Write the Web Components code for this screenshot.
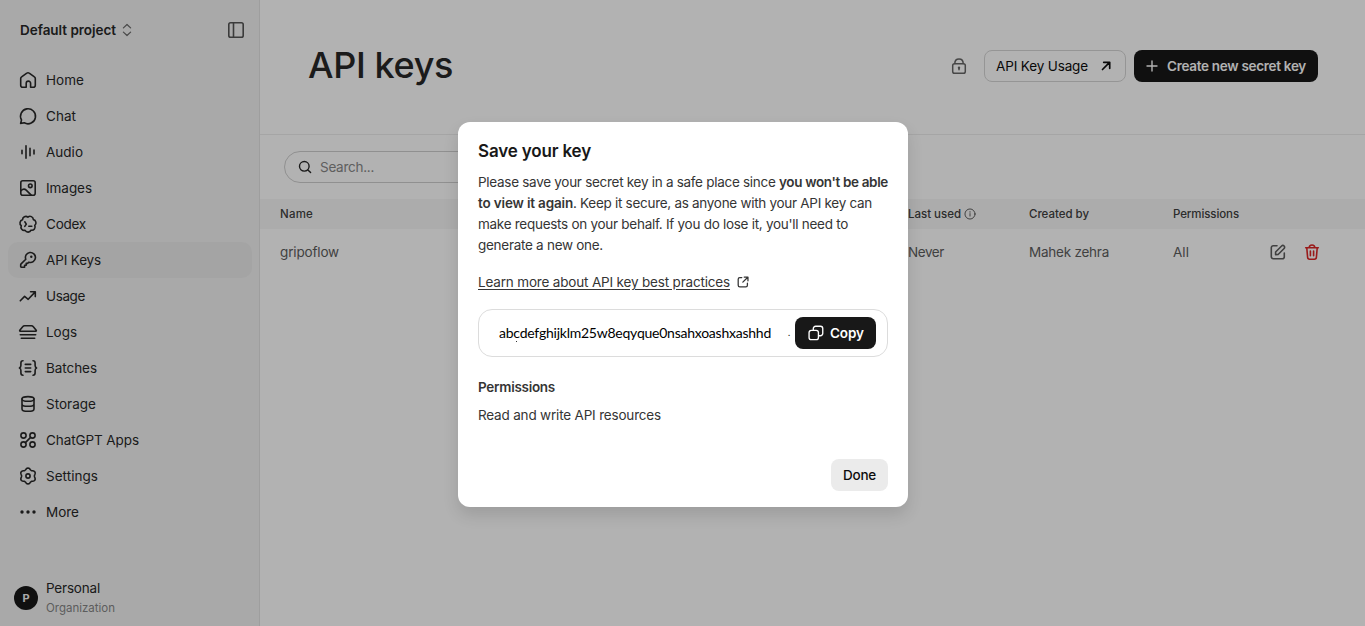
<!DOCTYPE html>
<html lang="en">
<head>
<meta charset="utf-8">
<title>API keys</title>
<style>
html,body{margin:0;height:100%;overflow:hidden}
body{font:400 13.5px/20px Inter,"Liberation Sans",sans-serif;color:#282828;background:#fff}
</style>
</head>
<body>
<keys-app></keys-app>
<script>
// closed outline made of n round lobes
function lobes(n,r,arc,turn){
    let d="";
    for(let i=0;i<=n;i++){
        const a=(turn+i*360/n)*Math.PI/180,x=(10+r*Math.cos(a)).toFixed(2),y=(10+r*Math.sin(a)).toFixed(2);
        d+=i?`A${arc} ${arc} 0 0 1 ${x} ${y}`:`M${x} ${y}`;
    }
    return d+"z";
}

// soft six-toothed wheel, one tooth straight up
function gear(r,depth){
    const pts=[];
    for(let a=0;a<360;a+=6){
        const t=a*Math.PI/180,q=r-depth*Math.cos(6*t);
        pts.push((10+q*Math.cos(t)).toFixed(2)+" "+(10+q*Math.sin(t)).toFixed(2));
    }
    return "M"+pts.join("L")+"z";
}

const icons={
    home:`<path d="M2.7 8.6c0-.7.3-1.3.9-1.7l5.2-3.7a2 2 0 0 1 2.4 0l5.2 3.7c.6.4.9 1 .9 1.7v6.6a2 2 0 0 1-2 2h-2.7v-3.9a2.2 2.2 0 0 0-4.4 0v3.9H4.7a2 2 0 0 1-2-2z"/>`,
    chat:`<path d="M2.6 17.4 3.5 14A7.5 7.5 0 1 1 6.3 16.8z"/>`,
    audio:`<path d="M4 8.3v3.4M8 3.7v12.6M12 6.3v7.4M16 8v4"/>`,
    images:`<rect x="2.8" y="2.8" width="14.4" height="14.4" rx="2"/><circle cx="12.3" cy="7.8" r="1.8"/><path d="M3 12.6c2-1.9 3.6-2 5.2-.5l5 5"/>`,
    codex:`<path d="${lobes(7,6.9,3.3,12)}"/><path d="m6.8 7.8 1.5 2.3-1.5 2.3M10.8 12.3h3"/>`,
    key:`<path d="M7.8 9.3A5 5 0 1 1 10.9 12.2L9.6 13.4H8.2v1.8H6.6v2H3.3a.6.6 0 0 1-.6-.6v-1.8c0-.3.1-.6.4-.9z"/><circle cx="13.3" cy="6.7" r="1.2" fill="currentColor" stroke="none"/>`,
    usage:`<path d="m2.3 14.8 4.3-4.4 3.6 2.9 6.8-7.2M12.6 5.8h4.7v4.8"/>`,
    logs:`<path d="M2.2 9.2h15.6c.5 0 .7-.5.4-.9l-3.1-3.8a2 2 0 0 0-1.6-.8h-7a2 2 0 0 0-1.6.8L1.8 8.3c-.3.4-.1.9.4.9zM2.3 12.7h15.4M3.3 16.3h13.4"/>`,
    batches:`<path d="M5 2.8c-1.5 0-2.1.7-2.1 2.1v2.7C2.9 9 2.6 9.5 1.4 10c1.2.5 1.5 1 1.5 2.4v2.7c0 1.4.6 2.1 2.1 2.1M15 2.8c1.5 0 2.1.7 2.1 2.1v2.7c0 1.4.3 1.9 1.5 2.4-1.2.5-1.5 1-1.5 2.4v2.7c0 1.4-.6 2.1-2.1 2.1M7.3 6.4h5.4M7.3 10h5.4M7.3 13.6h5.4"/>`,
    storage:`<ellipse cx="10" cy="4.9" rx="6" ry="2.3"/><path d="M4 4.9v10c0 1.3 2.7 2.4 6 2.4s6-1.1 6-2.4v-10M4 9.9c0 1.3 2.7 2.4 6 2.4s6-1.1 6-2.4"/>`,
    apps:`<circle cx="5.5" cy="5.5" r="2.6"/><circle cx="14.5" cy="5.5" r="2.6"/><circle cx="5.5" cy="14.5" r="2.6"/><circle cx="14.5" cy="14.5" r="2.6"/><path d="m12.6 7.4-5.2 5.2"/>`,
    settings:`<path d="${gear(7.2,.8)}"/><circle cx="10" cy="10" r="2.1"/>`,
    more:`<g fill="currentColor" stroke="none"><circle cx="4" cy="10" r="1.7"/><circle cx="10" cy="10" r="1.7"/><circle cx="16" cy="10" r="1.7"/></g>`,
    updown:`<path d="M6 7.6 10 3.8l4 3.8M6 12.4l4 3.8 4-3.8"/>`,
    panel:`<rect x="2.8" y="2.8" width="14.4" height="14.4" rx="1.8"/><path d="M7.5 3v14"/>`,
    lock:`<rect x="3.7" y="7.8" width="12.6" height="9.4" rx="1.8"/><path d="M5.8 7.600C5.800 4.700 7.400 3 10 3s4.200 1.700 4.200 4.600M10 12v1.800"/><circle cx="10" cy="11.7" r="1.2" fill="currentColor" stroke="none"/>`,
    arrow:`<path d="M6.5 13.5l6.800-6.800M7.700 6.300h6v6"/>`,
    plus:`<path d="M10 5v10M5 10h10"/>`,
    search:`<circle cx="9.3" cy="9.3" r="4.8"/><path d="m12.9 12.9 2.7 2.7"/>`,
    info:`<circle cx="10" cy="10" r="8.4"/><path d="M10 9.300v4.200"/><circle cx="10" cy="6.500" r="1" fill="currentColor" stroke="none"/>`,
    edit:`<path d="M9 3.700H5.300a2 2 0 0 0-2 2v9a2 2 0 0 0 2 2h9a2 2 0 0 0 2-2V11M7.600 12.600V10l6-6a1.700 1.700 0 0 1 2.500 2.500l-6 6z"/>`,
    trash:`<path d="M3.700 5.800h12.600M7.200 5.700c0-1.700.8-2.700 2.800-2.700s2.800 1 2.800 2.700M4.800 6l.8 9.300a2 2 0 0 0 2 1.900h4.800a2 2 0 0 0 2-1.900l.8-9.300M8.400 9v4.800M11.600 9v4.800"/>`,
    external:`<path d="M8.500 4.500H6a2 2 0 0 0-2 2V14a2 2 0 0 0 2 2h7.500a2 2 0 0 0 2-2v-2.500M11.500 3.800h4.700v4.700M16 4l-6.200 6.200"/>`,
    copy:`<rect x="2.300" y="7" width="10.400" height="10.400" rx="2.500"/><path d="M7 6.700V5a2.500 2.500 0 0 1 2.500-2.500H15A2.500 2.500 0 0 1 17.500 5v5.500a2.500 2.500 0 0 1-2.500 2.500h-2"/>`
};

class UiIcon extends HTMLElement{
    constructor(){
        super();
        this.attachShadow({mode:"open"});
    }
    connectedCallback(){
        const size=this.getAttribute("size")||20;
        this.shadowRoot.innerHTML=`
        <style>
            :host{display:block;flex:none;width:${size}px;height:${size}px}
            svg{display:block}
        </style>
        <svg width="${size}" height="${size}" viewBox="0 0 20 20" fill="none" stroke="currentColor" stroke-width="${this.getAttribute("stroke")||1.6}" stroke-linecap="round" stroke-linejoin="round">${icons[this.getAttribute("name")]}</svg>`;
    }
}

// one line of text, tracked so that it fills w pixels
class FitText extends HTMLElement{
    constructor(){
        super();
        this.attachShadow({mode:"open"}).innerHTML=`<style>
            :host{display:inline-block;flex:none;vertical-align:top}
            span{white-space:pre}
        </style><span><slot></slot></span>`;
    }
    connectedCallback(){
        const w=+this.getAttribute("w"),span=this.shadowRoot.querySelector("span");
        const gap=(w-span.getBoundingClientRect().width)/this.textContent.length;
        span.style.letterSpacing=gap.toFixed(3)+"px";
        this.style.width=w+"px";
    }
}

class NavItem extends HTMLElement{
    constructor(){
        super();
        this.attachShadow({mode:"open"}).innerHTML=`
        <style>
            :host{display:flex;align-items:center;gap:8px;height:36px;padding-left:10px;border-radius:10px;box-sizing:border-box}
            :host([active]){background:#ebebeb}
        </style>
        <ui-icon name="${this.getAttribute("icon")}"></ui-icon><slot></slot>`;
    }
}

class UiButton extends HTMLElement{
    constructor(){
        super();
        this.attachShadow({mode:"open"}).innerHTML=`
        <style>
            :host{display:flex;align-items:center;height:32px;padding:0 12px;border-radius:8px;box-sizing:border-box;flex:none;color:#0d0d0d}
            :host([kind=outline]){border:1px solid #d6d6d6;padding:0 11px}
            :host([kind=solid]){background:#181818;color:#fff;font-weight:600}
            :host([kind=soft]){background:#ebebeb}
        </style>
        <slot></slot>`;
    }
}

class SideBar extends HTMLElement{
    constructor(){
        super();
        const items=[["home","Home",38],["chat","Chat",30],["audio","Audio",37],["images","Images",46],["codex","Codex",40],["key","API Keys",55],["usage","Usage",39],["logs","Logs",31],["batches","Batches",51],["storage","Storage",50],["apps","ChatGPT Apps",93],["settings","Settings",52],["more","More",33]];
        this.attachShadow({mode:"open"}).innerHTML=`
        <style>
            :host{display:flex;flex-direction:column;width:260px;height:100%;box-sizing:border-box;border-right:1px solid #e2e2e2;background:#f3f3f3;flex:none}
            header{display:flex;align-items:center;height:60px;padding:0 13px 0 20px;font-weight:600}
            header .ud{margin-left:2px;color:#6b6b6b}
            header .panel{margin-left:auto;color:#555}
            nav{padding:2px 7px 0 8px}
            footer{display:flex;align-items:center;gap:8px;margin-top:auto;padding:0 14px 8px;height:40px}
            .avatar{width:24px;height:24px;border-radius:50%;background:#181818;color:#f3f3f3;display:grid;place-items:center;font-size:11px;font-weight:700}
            .who{display:flex;flex-direction:column}
            small{font-size:11.5px;color:#868686}
        </style>
        <header><fit-text w="96">Default project</fit-text><ui-icon class="ud" name="updown" size="18" stroke="1.4"></ui-icon><ui-icon class="panel" name="panel"></ui-icon></header>
        <nav>${items.map(([icon,name,w])=>`<nav-item icon="${icon}"${icon==="key"?" active":""}><fit-text w="${w}">${name}</fit-text></nav-item>`).join("")}</nav>
        <footer><div class="avatar">P</div><div class="who"><fit-text w="54">Personal</fit-text><small><fit-text w="69">Organization</fit-text></small></div></footer>`;
    }
}

class KeysPage extends HTMLElement{
    constructor(){
        super();
        this.attachShadow({mode:"open"}).innerHTML=`
        <style>
            :host{display:block;flex:1;min-width:0}
            header{display:flex;align-items:center;height:135px;padding:0 47px 2px 48px;box-sizing:border-box;border-bottom:1px solid #ececec}
            h1{margin:0 auto 2px 0;font-size:36px;line-height:44px;font-weight:500}
            .lock{color:#666;margin-right:15px}
            .tools{display:flex;gap:8px}
            .search{display:flex;align-items:center;gap:5px;width:300px;height:32px;margin:16px 0 16px 24px;padding-left:10px;border:1px solid #cfcfcf;border-radius:16px;box-sizing:border-box;color:#282828}
            .search fit-text{color:#888}
            .row{display:grid;grid-template-columns:628px 121px 144px 95px 34px 20px;padding-left:20px;align-items:center;height:45px}
            .head{height:30px;background:#f7f7f7;font-size:11.5px;font-weight:450;color:#404040}
            .body{color:#5d5d5d}
            .head div{display:flex;align-items:center;gap:3px}
        </style>
        <header>
            <h1><fit-text w="145">API keys</fit-text></h1>
            <ui-icon class="lock" name="lock" stroke="1.5"></ui-icon>
            <div class="tools">
                <ui-button kind="outline"><fit-text w="92">API Key Usage</fit-text><ui-icon name="arrow" stroke="1.7" style="margin:0 -2px 0 8px"></ui-icon></ui-button>
                <ui-button kind="solid"><ui-icon name="plus" stroke="1.4" style="margin:0 5px 0 -4px"></ui-icon><fit-text w="139">Create new secret key</fit-text></ui-button>
            </div>
        </header>
        <div class="search"><ui-icon name="search" stroke="1.4"></ui-icon><fit-text w="54">Search...</fit-text></div>
        <div class="row head"><div><fit-text w="33">Name</fit-text></div><div><fit-text w="53">Last used</fit-text><ui-icon name="info" size="12" stroke="1.400"></ui-icon></div><div><fit-text w="60">Created by</fit-text></div><div><fit-text w="66">Permissions</fit-text></div></div>
        <div class="row body"><fit-text w="59">gripoflow</fit-text><fit-text w="36">Never</fit-text><fit-text w="80">Mahek zehra</fit-text><fit-text w="16">All</fit-text><ui-icon name="edit"></ui-icon><ui-icon name="trash" style="color:#dc2626"></ui-icon></div>`;
    }
}

class KeyDialog extends HTMLElement{
    constructor(){
        super();
        this.attachShadow({mode:"open"}).innerHTML=`
        <style>
            :host{display:flex;flex-direction:column;width:450px;height:385px;margin:3px 0 0 1px;padding:16px 20px;box-sizing:border-box;border-radius:12px;background:#fff;box-shadow:0 8px 16px rgba(0,0,0,.12);color:#353535}
            h2{margin:0;font-size:17px;line-height:26px;font-weight:600;color:#181818}
            p{margin:8px 0 0;line-height:21px}
            p span{height:21px;white-space:nowrap;display:flex}
            b{font-weight:600}
            .link{display:flex;align-items:center;gap:5px;height:20px;margin-top:16px}
            .link fit-text{text-decoration:underline;text-underline-offset:2px}
            .key{display:flex;align-items:center;height:48px;margin-top:17px;padding:0 11px 0 20px;box-sizing:border-box;border:1px solid #dcdcdc;border-radius:14px}
            .value{position:relative;display:flex;flex:1;font:14px/20px Lato,sans-serif;color:#000}
            .value i{position:absolute;left:17px;top:18px;width:1px;height:1px;background:#333}
            .dot{margin-left:17px;font-size:9px}
            h3{margin:20px 0 0;font-size:13.5px;line-height:20px;font-weight:600}
            .scope{margin-top:8px}
            ui-button[kind=soft]{margin:auto 0 0 auto;font-weight:500}
        </style>
        <h2><fit-text w="113">Save your key</fit-text></h2>
        <p>
            <span><fit-text w="301">Please save your secret key in a safe place since </fit-text><b><fit-text w="109">you won't be able</fit-text></b></span>
            <span><b><fit-text w="95">to view it again</fit-text></b><fit-text w="299">. Keep it secure, as anyone with your API key can</fit-text></span>
            <span><fit-text w="370">make requests on your behalf. If you do lose it, you'll need to</fit-text></span>
            <span><fit-text w="125">generate a new one.</fit-text></span>
        </p>
        <div class="link"><fit-text w="252">Learn more about API key best practices</fit-text><ui-icon name="external" size="16" stroke="1.6"></ui-icon></div>
        <div class="key">
            <div class="value"><fit-text w="272">abcdefghijklm25w8eqyque0nsahxoashxashhd</fit-text><i></i><span class="dot">.</span></div>
            <ui-button kind="solid"><ui-icon name="copy" size="18" stroke="1.5" style="margin-right:5px"></ui-icon><fit-text w="34">Copy</fit-text></ui-button>
        </div>
        <h3><fit-text w="77">Permissions</fit-text></h3>
        <div class="scope"><fit-text w="183">Read and write API resources</fit-text></div>
        <ui-button kind="soft"><fit-text w="33">Done</fit-text></ui-button>`;
    }
}

class KeysApp extends HTMLElement{
    constructor(){
        super();
        this.attachShadow({mode:"open"}).innerHTML=`
        <style>
            :host{display:flex;height:100vh}
            .backdrop{position:absolute;inset:0;display:grid;place-items:center;background:rgba(0,0,0,.3)}
        </style>
        <side-bar></side-bar>
        <keys-page></keys-page>
        <div class="backdrop"><key-dialog></key-dialog></div>`;
    }
}

customElements.define("ui-icon",UiIcon);
customElements.define("ui-button",UiButton);
customElements.define("nav-item",NavItem);
customElements.define("side-bar",SideBar);
customElements.define("keys-page",KeysPage);
customElements.define("key-dialog",KeyDialog);
customElements.define("keys-app",KeysApp);
customElements.define("fit-text",FitText);
</script>
</body>
</html>
